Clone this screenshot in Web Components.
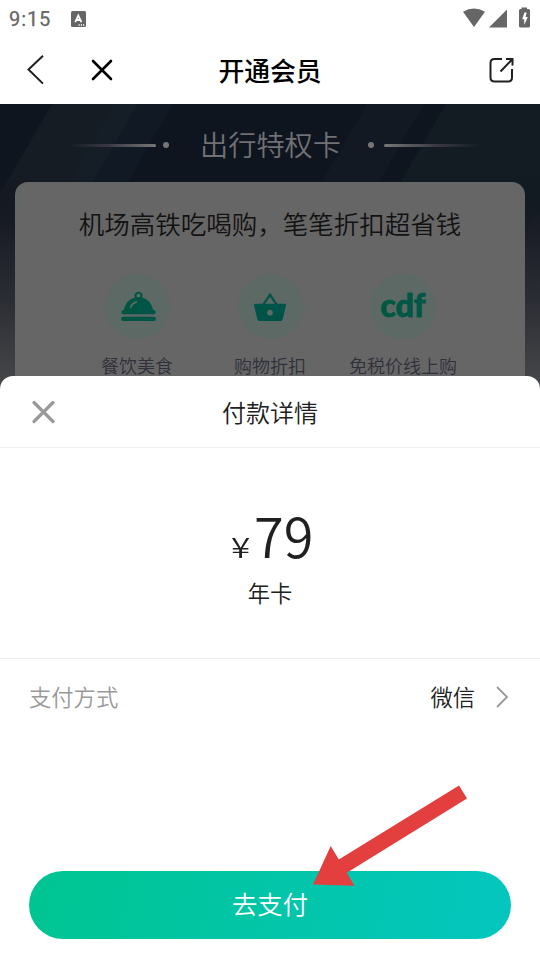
<!DOCTYPE html>
<html lang="zh-CN">
<head>
<meta charset="utf-8">
<title>开通会员</title>
<style>
html,body{margin:0;padding:0}
body{width:540px;height:960px;overflow:hidden;background:#fff;color:#202020;font-family:"Noto Sans CJK SC",sans-serif}
</style>
</head>
<body>
<member-page></member-page>
<script>
function define(name, markup) {
  const template = document.createElement('template');
  template.innerHTML = markup;
  customElements.define(name, class extends HTMLElement {
    constructor() {
      super();
      this.attachShadow({ mode: 'open' }).append(template.content.cloneNode(true));
    }
  });
}

define('status-bar', `
<style>
:host{display:flex;height:37px;box-sizing:border-box;padding:0 8px 0 9px;align-items:center;color:#666}
time{font:400 20px/24px Roboto,sans-serif;letter-spacing:.9px;width:62px;-webkit-text-stroke:.25px #666}
.gap{flex:1}
svg{display:block}
</style>
<time>9:15</time>
<svg width="16" height="16" viewBox="0 0 16 16"><rect x="0" y="0" width="15" height="16" rx="1.5" fill="#666"/><path d="M4.2 11.2 7.3 4.6 10.4 11.2M5.2 9h4.2" fill="none" stroke="#fff" stroke-width="1.8"/><path d="M7.6 14h1.2m1 0H11m1 0h1.2" stroke="#fff" stroke-width="1.3"/></svg>
<span class="gap"></span>
<svg width="69" height="24" viewBox="463 6.500 69 24" fill="#666"><path d="M463 11.2Q474 4.800 485 11.200L474 26.500ZM489 27 507 9v18ZM519 10q0-1.500 1.500-1.500h1V7h5.500v1.500h1.500q1.500 0 1.500 1.500v15.500q0 1.500-1.500 1.500h-8q-1.500 0-1.500-1.500Z"/><path d="m524.500 12-2.300 6.800h2v5.700l3.600-8h-2.200l1-4.500z" fill="#fff"/></svg>`);

define('nav-bar', `
<style>
:host{display:grid;grid-template-columns:180px 180px 180px;height:67px;box-sizing:border-box;padding-bottom:2px;align-items:center;color:#000}
.left{display:flex;padding-left:25px;gap:43px}
h1{margin:0;font-size:25.800px;line-height:38px;font-weight:500;text-align:center;white-space:nowrap}
.right{display:flex;justify-content:flex-end;padding-right:25px}
svg{display:block;fill:none}
</style>
<div class="left">
<svg width="20" height="30" viewBox="0 0 20 30"><path d="M18 .8 3.500 14.500 18 28.600" stroke="#202020" stroke-width="2"/></svg>
<svg width="28" height="30" viewBox="0 0 28 30"><path d="m5 6 18 18M23 6 5 24" stroke="#000" stroke-width="2.600" stroke-linecap="round"/></svg>
</div>
<h1>开通会员</h1>
<div class="right"><svg width="28" height="28" viewBox="0 0 28 28"><path d="M15 3H7.500q-4 0-4 4v14.500q0 4 4 4h13.500q4 0 4-4V13M19 3H25.500V9.500M25.500 3 13.500 15.500" stroke="#202020" stroke-width="2"/></svg></div>`);

define('rule-mark', `
<style>
:host{display:flex;align-items:center;gap:7px}
:host([flip]){flex-direction:row-reverse}
i{width:88px;height:3px;border-radius:2px;background:linear-gradient(90deg,transparent,#393842 45%,#777)}
:host([flip]) i{background:linear-gradient(270deg,transparent,#393842 45%,#777);width:97px}
:host([flip]){gap:10px}
b{width:6px;height:6px;border-radius:50%;background:#777}
</style><i></i><b></b>`);

define('benefit-item', `
<style>
:host{display:flex;flex-direction:column;align-items:center;width:133px;flex:none}
.disc{width:65px;height:65px;border-radius:50%;background:#5c6965;display:flex;align-items:center;justify-content:center}
.label{margin-top:13px;font-size:18px;line-height:27px;color:#30303b;white-space:nowrap;font-weight:350}
</style>
<div class="disc"><slot name="icon"></slot></div><div class="label"><slot></slot></div>`);

define('member-hero', `
<style>
:host{display:block;position:relative;height:288px;background:linear-gradient(#0e151f 0 26%,#1b1e27 45%,#2b2d34 68%,#48494b);overflow:hidden}
.rays{position:absolute;inset:0;-webkit-mask-image:linear-gradient(#000 0 25%,transparent 45%);mask-image:linear-gradient(#000 0 25%,transparent 45%)}
.content{position:relative;display:flex;flex-direction:column;height:100%}
header{display:flex;align-items:center;justify-content:center;height:78px;box-sizing:border-box;padding:4px 0 0 9px}
h2{font-size:28.200px;line-height:40px;font-weight:350;margin:0 27px 0 31px;padding-bottom:2px;color:#707174;white-space:nowrap}
.card{margin:0 15px;flex:1;background:#666;border-radius:13px 13px 0 0;text-align:center}
h3{font-size:25.500px;line-height:38px;font-weight:350;margin:0;padding-top:22px;color:#121212;white-space:nowrap}
.items{display:flex;justify-content:center;margin-top:32px}
svg{display:block}
.dish{margin:0 -1px 0 2px}
.cdf{font:900 32px/36px Lato,sans-serif;margin-bottom:4px;background:linear-gradient(90deg,#00583f,#00564c);background-clip:text;-webkit-background-clip:text;color:transparent;-webkit-text-stroke:.5px #00573f}
</style>
<svg class="rays" width="540" height="288" viewBox="0 0 540 288">
<path d="M52 0h86L30 186h-86Z" fill="#151c23"/><path d="M115 0h58L65 186H7Z" fill="#17202a" opacity=".45"/><path d="M367 0h57L316 186h-57Z" fill="#151c25" opacity=".65"/><path d="M446 0h154L492 186H338Z" fill="#141d23" opacity=".85"/></svg>
<div class="content">
<header><rule-mark></rule-mark><h2>出行特权卡</h2><rule-mark flip></rule-mark></header>
<div class="card"><h3>机场高铁吃喝购，笔笔折扣超省钱</h3>
<div class="items">
<benefit-item><svg class="dish" slot="icon" width="35" height="31" viewBox="0 0 36 32"><defs><linearGradient id="g"><stop stop-color="#00563f"/><stop offset="1" stop-color="#005549"/></linearGradient></defs><circle cx="18" cy="5" r="3.200" fill="none" stroke="#005543" stroke-width="2.200"/><path d="M3 19.500C5.500 2 30.500 2 33 19.500h.5a2 2 0 0 1 0 4.500h-31a2 2 0 0 1 0-4.500Z" fill="url(#g)"/><rect x="0" y="26.500" width="36" height="4.500" rx="2.200" fill="url(#g)"/><path d="M10 16.500q1.500-4 5.500-5" fill="none" stroke="#5c6965" stroke-width="2" stroke-linecap="round"/></svg>餐饮美食</benefit-item>
<benefit-item><svg class="basket" slot="icon" width="34" height="30" viewBox="0 0 36 32"><path d="m10.500 14 7.500-11 7.500 11" fill="none" stroke="#005447" stroke-width="2.400"/><path d="M2.500 12.500h31q2 0 1.500 2l-3.500 14.500q-.5 2-2.500 2H7q-2 0-2.500-2L1 14.500q-.500-2 1.500-2Z" fill="#005447"/><circle cx="18" cy="22" r="3" fill="#5c6965"/></svg>购物折扣</benefit-item>
<benefit-item><span slot="icon" class="cdf">cdf</span>免税价线上购</benefit-item>
</div></div></div>`);

define('payment-row', `
<style>
:host{display:flex;align-items:center;height:78px;box-sizing:border-box;padding:0 29px;font-size:22.300px;line-height:32px;font-weight:350;border-top:1px solid #f0f0f0}
span{padding-bottom:3px}
.label{color:#999;flex:1}
.value{color:#202020}
svg{display:block;margin:0 2px 2px 20px}
</style>
<span class="label"><slot></slot></span><span class="value"><slot name="value"></slot></span>
<svg width="14" height="22" viewBox="0 0 14 22"><path d="m2 1 10 10L2 21" fill="none" stroke="#999" stroke-width="1.800"/></svg>`);

define('pay-button', `
<style>
:host{display:block;margin:0 29px}
button{display:block;width:100%;height:68px;border:0;border-radius:34px;padding:0 0 4px;background:linear-gradient(100deg,#00c591,#04c6bf);color:#fff;font:350 25.400px/38px "Noto Sans CJK SC",sans-serif}
</style><button><slot></slot></button>`);

define('payment-sheet', `
<style>
:host{display:flex;flex-direction:column;position:relative;height:584px;margin-top:-16px;box-sizing:border-box;background:#fff;border-radius:13px 13px 0 0;font-weight:350}
header{display:grid;grid-template-columns:80px 1fr 80px;height:72px;box-sizing:border-box;border-bottom:1px solid #f0f0f0;align-items:center}
header svg{margin-left:30px}
svg{display:block}
h2{font-size:24px;line-height:36px;font-weight:350;margin:0;text-align:center}
.amount{height:210px;display:flex;flex-direction:column;align-items:center;box-sizing:border-box;padding-top:46px}
.price{display:flex;align-items:baseline;height:82px;line-height:82px;font-size:54px;gap:8px;padding-left:4px}
.price small{font-size:28px;transform:scaleX(1.25);transform-origin:0 50%}
.plan{font-size:22.300px;line-height:32px}
pay-button{margin-top:auto;margin-bottom:21px}
.pointer{position:absolute;left:313px;top:409px}
</style>
<header><svg width="27" height="26" viewBox="0 0 27 26"><path d="m4 3.500 19 19M23 3.500l-19 19" stroke="#999" stroke-width="3.200" stroke-linecap="round"/></svg><h2>付款详情</h2></header>
<div class="amount"><div class="price"><small>¥</small><span>79</span></div><div class="plan">年卡</div></div>
<payment-row>支付方式<span slot="value">微信</span></payment-row>
<pay-button>去支付</pay-button>
<svg class="pointer" width="156" height="102" viewBox="0 0 156 102"><path d="M0 99.500 17.700 61l8.100 13.400L146 .5l8 13-120.200 74.200 7.700 13Z" fill="#e43f3f"/></svg>`);

define('member-page', `
<style>:host{display:block;width:540px;height:960px;overflow:hidden}</style>
<status-bar></status-bar><nav-bar></nav-bar><member-hero></member-hero><payment-sheet></payment-sheet>`);
</script>
</body>
</html>
